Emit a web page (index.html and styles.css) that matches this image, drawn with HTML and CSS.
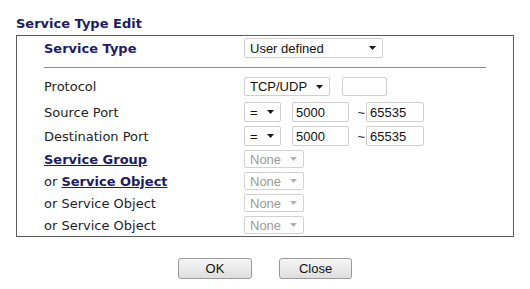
FILE: index.html
```html
<!DOCTYPE html>
<html>
<head>
<meta charset="utf-8">
<link rel="stylesheet" href="styles.css">
</head>
<body>
<div class="title">Service Type Edit</div>
<div class="box">
  <div class="row row-type">
    <div class="label strong">Service Type</div>
    <div class="ctrl">
      <div class="sel w-type"><span>User defined</span><svg class="arr" width="7" height="4" viewBox="0 0 7 4"><path d="M0 0H7L3.5 4Z"/></svg></div>
    </div>
  </div>
  <div class="sep"></div>
  <div class="rows">
    <div class="row row-proto">
      <div class="label">Protocol</div>
      <div class="ctrl">
        <div class="sel w-proto"><span>TCP/UDP</span><svg class="arr" width="7" height="4" viewBox="0 0 7 4"><path d="M0 0H7L3.5 4Z"/></svg></div>
        <div class="inp w-small"></div>
      </div>
    </div>
    <div class="row row-port">
      <div class="label">Source Port</div>
      <div class="ctrl">
        <div class="sel w-eq"><span>=</span><svg class="arr" width="7" height="4" viewBox="0 0 7 4"><path d="M0 0H7L3.5 4Z"/></svg></div>
        <div class="inp w-port1">5000</div>
        <span class="tilde">~</span>
        <div class="inp w-port2">65535</div>
      </div>
    </div>
    <div class="row row-port">
      <div class="label">Destination Port</div>
      <div class="ctrl">
        <div class="sel w-eq"><span>=</span><svg class="arr" width="7" height="4" viewBox="0 0 7 4"><path d="M0 0H7L3.5 4Z"/></svg></div>
        <div class="inp w-port1">5000</div>
        <span class="tilde">~</span>
        <div class="inp w-port2">65535</div>
      </div>
    </div>
    <div class="row row-obj">
      <div class="label"><a class="link" href="#">Service Group</a></div>
      <div class="ctrl">
        <div class="sel dis w-none"><span>None</span><svg class="arr" width="7" height="4" viewBox="0 0 7 4"><path d="M0 0H7L3.5 4Z"/></svg></div>
      </div>
    </div>
    <div class="row row-obj">
      <div class="label">or <a class="link" href="#">Service Object</a></div>
      <div class="ctrl">
        <div class="sel dis w-none"><span>None</span><svg class="arr" width="7" height="4" viewBox="0 0 7 4"><path d="M0 0H7L3.5 4Z"/></svg></div>
      </div>
    </div>
    <div class="row row-obj">
      <div class="label">or Service Object</div>
      <div class="ctrl">
        <div class="sel dis w-none"><span>None</span><svg class="arr" width="7" height="4" viewBox="0 0 7 4"><path d="M0 0H7L3.5 4Z"/></svg></div>
      </div>
    </div>
    <div class="row row-obj">
      <div class="label">or Service Object</div>
      <div class="ctrl">
        <div class="sel dis w-none"><span>None</span><svg class="arr" width="7" height="4" viewBox="0 0 7 4"><path d="M0 0H7L3.5 4Z"/></svg></div>
      </div>
    </div>
  </div>
</div>
<div class="buttons">
  <button class="btn w-ok">OK</button>
  <button class="btn w-close">Close</button>
</div>
</body>
</html>
```
FILE: styles.css
```css
html, body {
  margin: 0;
  padding: 0;
  background: #ffffff;
}
body {
  padding-top: 16px;
  font-family: "DejaVu Sans", Verdana, sans-serif;
  font-size: 13px;
  color: #1e1e1e;
}
.title {
  margin-left: 16px;
  font-weight: bold;
  line-height: 15px;
  color: #1c1c64;
  margin-bottom: 4px;
}
.box {
  margin-left: 16px;
  width: 496px;
  height: 200px;
  border: 1px solid #5a5a5a;
  box-sizing: content-box;
  padding-top: 2px;
  padding-left: 27px;
  box-sizing: border-box;
  width: 498px;
  height: 202px;
}
.row {
  display: flex;
  align-items: center;
}
.label {
  width: 200px;
  flex: none;
  line-height: 15px;
  white-space: nowrap;
}
.strong {
  font-weight: bold;
  color: #1c1c64;
}
.link {
  font-weight: bold;
  color: #1c1c64;
  text-decoration: underline;
}
.ctrl {
  display: flex;
  align-items: center;
}
.row-type { height: 20px; }
.row-type .sel { height: 20px; }
.sep {
  width: 442px;
  height: 1px;
  background: #8a8a8a;
  margin: 9px 0 9px 0;
}
.rows {
  display: flex;
  flex-direction: column;
  gap: 4px;
}
.row-proto { height: 19px; margin-bottom: 2px; }
.row-proto .sel, .row-proto .inp { height: 19px; }
.row-port { height: 20px; }
.row-port .sel, .row-port .inp { height: 20px; }
.row-obj { height: 18px; }
.row-obj .sel { height: 18px; }

.sel, .inp {
  box-sizing: border-box;
  border: 1px solid #cfcfcf;
  border-radius: 2px;
  background: #fff;
  font-family: "Liberation Sans", Arial, sans-serif;
  font-size: 13px;
  color: #111;
  display: flex;
  align-items: center;
}
.sel {
  justify-content: space-between;
  padding: 0 6px 0 5px;
}
.sel .arr { fill: #1a1a1a; flex: none; }
.sel.dis { color: #9a9a9a; border-color: #d2d2d2; }
.sel.dis .arr { fill: #b0b0b0; }
.inp { padding-left: 3px; }

.w-type { width: 139px; }
.w-proto { width: 86px; }
.w-small { width: 45px; margin-left: 12px; }
.w-eq { width: 37px; }
.w-port1 { width: 57px; margin-left: 11px; }
.w-port2 { width: 58px; }
.w-none { width: 60px; }
.tilde {
  width: 17px;
  text-align: right;
  padding-right: 1px;
  box-sizing: border-box;
  font-family: "Liberation Sans", Arial, sans-serif;
  font-size: 13px;
  color: #222;
}

.buttons {
  display: flex;
  justify-content: center;
  gap: 27px;
  margin-top: 21px;
}
.btn {
  height: 21px;
  box-sizing: border-box;
  border: 1px solid #9a9a9a;
  border-radius: 3px;
  background: linear-gradient(#f6f6f6, #dedede);
  font-family: "Liberation Sans", Arial, sans-serif;
  font-size: 13px;
  color: #111;
  padding: 0;
}
.w-ok { width: 74px; }
.w-close { width: 73px; }
```
